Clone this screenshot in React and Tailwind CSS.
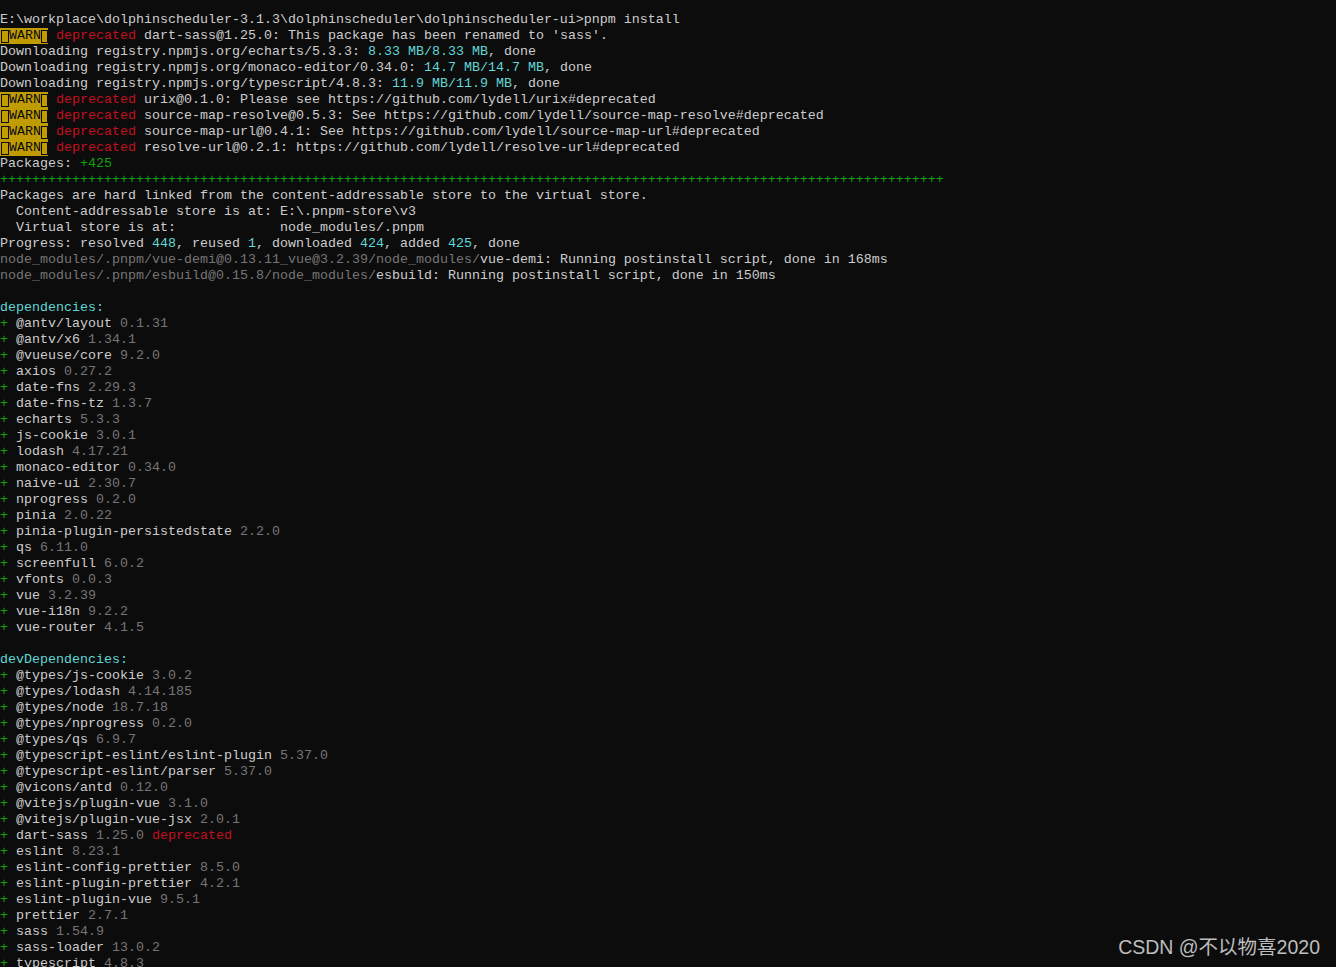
import React from "react";

const W = "text-[#cccccc]";
const R = "text-[#c50f1f]";
const C = "text-[#61d6d6]";
const G = "text-[#13a10e]";
const D = "text-[#767676]";

function Warn() {
  return (
    <span className="inline-flex h-[16px] w-[48px] items-center bg-[#c19c00] align-top text-[#0c0c0c]">
      <span className="ml-[1px] inline-block h-[13px] w-[8px] border border-[#0c0c0c]" />
      <span>WARN</span>
      <span className="inline-block h-[13px] w-[7px] border border-[#0c0c0c]" />
    </span>
  );
}

const lines = [
  [["E:\\workplace\\dolphinscheduler-3.1.3\\dolphinscheduler\\dolphinscheduler-ui>pnpm install", W]],
  ["warn", [" deprecated", R], [" dart-sass@1.25.0: This package has been renamed to 'sass'.", W]],
  [["Downloading registry.npmjs.org/echarts/5.3.3: ", W], ["8.33 MB/8.33 MB", C], [", done", W]],
  [["Downloading registry.npmjs.org/monaco-editor/0.34.0: ", W], ["14.7 MB/14.7 MB", C], [", done", W]],
  [["Downloading registry.npmjs.org/typescript/4.8.3: ", W], ["11.9 MB/11.9 MB", C], [", done", W]],
  ["warn", [" deprecated", R], [" urix@0.1.0: Please see https://github.com/lydell/urix#deprecated", W]],
  ["warn", [" deprecated", R], [" source-map-resolve@0.5.3: See https://github.com/lydell/source-map-resolve#deprecated", W]],
  ["warn", [" deprecated", R], [" source-map-url@0.4.1: See https://github.com/lydell/source-map-url#deprecated", W]],
  ["warn", [" deprecated", R], [" resolve-url@0.2.1: https://github.com/lydell/resolve-url#deprecated", W]],
  [["Packages: ", W], ["+425", G]],
  [["+".repeat(118), G]],
  [["Packages are hard linked from the content-addressable store to the virtual store.", W]],
  [["  Content-addressable store is at: E:\\.pnpm-store\\v3", W]],
  [["  Virtual store is at:             node_modules/.pnpm", W]],
  [
    ["Progress: resolved ", W], ["448", C], [", reused ", W], ["1", C],
    [", downloaded ", W], ["424", C], [", added ", W], ["425", C], [", done", W],
  ],
  [["node_modules/.pnpm/vue-demi@0.13.11_vue@3.2.39/node_modules/", D], ["vue-demi: Running postinstall script, done in 168ms", W]],
  [["node_modules/.pnpm/esbuild@0.15.8/node_modules/", D], ["esbuild: Running postinstall script, done in 150ms", W]],
  [],
  [["dependencies:", C]],
];

const deps = [
  ["@antv/layout", "0.1.31"],
  ["@antv/x6", "1.34.1"],
  ["@vueuse/core", "9.2.0"],
  ["axios", "0.27.2"],
  ["date-fns", "2.29.3"],
  ["date-fns-tz", "1.3.7"],
  ["echarts", "5.3.3"],
  ["js-cookie", "3.0.1"],
  ["lodash", "4.17.21"],
  ["monaco-editor", "0.34.0"],
  ["naive-ui", "2.30.7"],
  ["nprogress", "0.2.0"],
  ["pinia", "2.0.22"],
  ["pinia-plugin-persistedstate", "2.2.0"],
  ["qs", "6.11.0"],
  ["screenfull", "6.0.2"],
  ["vfonts", "0.0.3"],
  ["vue", "3.2.39"],
  ["vue-i18n", "9.2.2"],
  ["vue-router", "4.1.5"],
];

const devDeps = [
  ["@types/js-cookie", "3.0.2"],
  ["@types/lodash", "4.14.185"],
  ["@types/node", "18.7.18"],
  ["@types/nprogress", "0.2.0"],
  ["@types/qs", "6.9.7"],
  ["@typescript-eslint/eslint-plugin", "5.37.0"],
  ["@typescript-eslint/parser", "5.37.0"],
  ["@vicons/antd", "0.12.0"],
  ["@vitejs/plugin-vue", "3.1.0"],
  ["@vitejs/plugin-vue-jsx", "2.0.1"],
  ["dart-sass", "1.25.0", true],
  ["eslint", "8.23.1"],
  ["eslint-config-prettier", "8.5.0"],
  ["eslint-plugin-prettier", "4.2.1"],
  ["eslint-plugin-vue", "9.5.1"],
  ["prettier", "2.7.1"],
  ["sass", "1.54.9"],
  ["sass-loader", "13.0.2"],
  ["typescript", "4.8.3"],
];

function pkgLine([name, ver, dep]) {
  const segs = [["+ ", G], [name + " ", W], [ver, D]];
  if (dep) segs.push([" deprecated", R]);
  return segs;
}

const allLines = [
  ...lines,
  ...deps.map(pkgLine),
  [],
  [["devDependencies:", C]],
  ...devDeps.map(pkgLine),
];

export default function App() {
  return (
    <div className="relative h-[967px] w-[1336px] overflow-hidden bg-[#0c0c0c]">
      <div
        className="pt-[12px] text-[13.333px] leading-[16px] whitespace-pre"
        style={{ fontFamily: '"Liberation Mono", "DejaVu Sans Mono", monospace' }}
      >
        {allLines.map((segs, i) => (
          <div key={i} className="h-[16px]">
            {segs.map((s, j) =>
              s === "warn" ? (
                <Warn key={j} />
              ) : (
                <span key={j} className={s[1]}>
                  {s[0]}
                </span>
              )
            )}
          </div>
        ))}
      </div>

      {/* watermark */}
      <div
        className="absolute bottom-[5px] right-[16px] text-[19.5px] text-[#bdbdbd]"
        style={{ fontFamily: '"Liberation Sans", "Noto Sans CJK SC", sans-serif' }}
      >
        CSDN @不以物喜2020
      </div>
    </div>
  );
}
